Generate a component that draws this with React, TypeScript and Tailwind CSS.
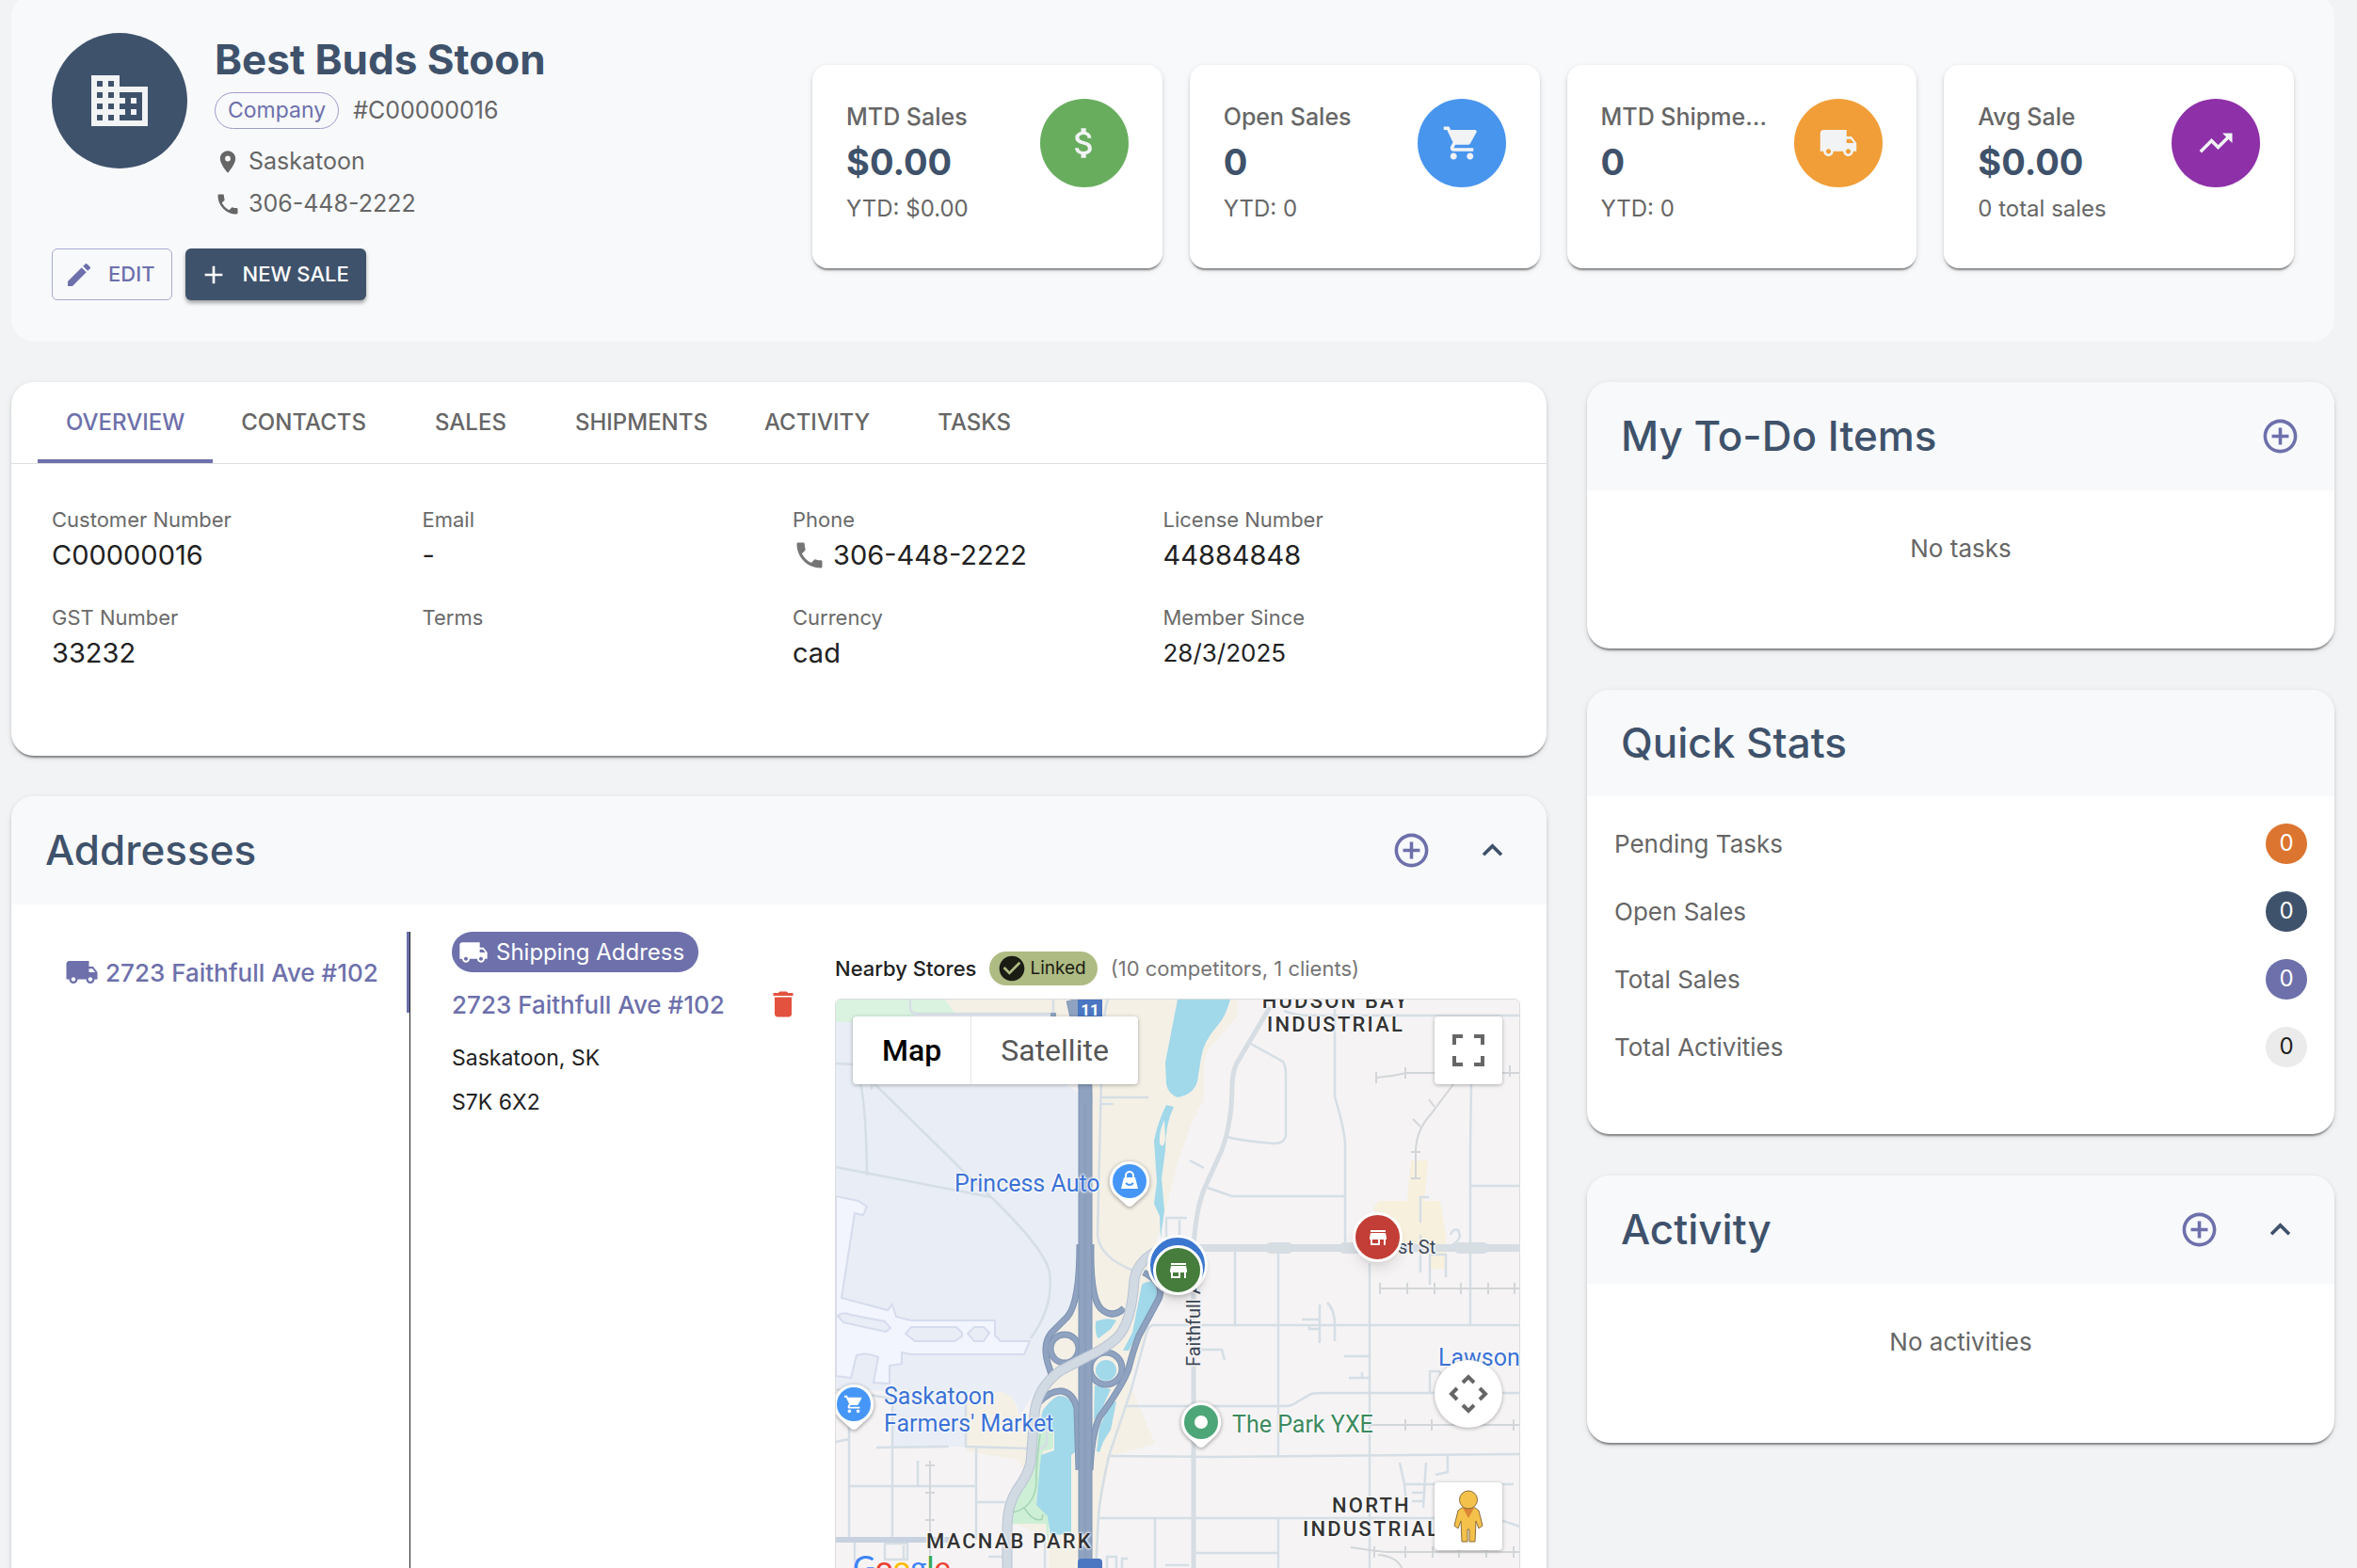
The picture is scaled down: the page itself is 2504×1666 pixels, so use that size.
import React, { useState } from "react";
import {
  MdAdd,
  MdAddCircleOutline,
  MdAttachMoney,
  MdBusiness,
  MdCheckCircle,
  MdDelete,
  MdEdit,
  MdExpandLess,
  MdLocalShipping,
  MdLocationOn,
  MdPhone,
  MdShoppingCart,
  MdStore,
  MdTrendingUp,
} from "react-icons/md";

const cardShadow =
  "shadow-[0_4px_2px_-2px_rgba(0,0,0,0.3),0_2px_2px_0_rgba(0,0,0,0.16),0_2px_6px_0_rgba(0,0,0,0.12)]";

const stats = [
  { label: "MTD Sales", value: "$0.00", note: "YTD: $0.00", color: "bg-[#68ad5e]", Icon: MdAttachMoney },
  { label: "Open Sales", value: "0", note: "YTD: 0", color: "bg-[#4895ee]", Icon: MdShoppingCart },
  { label: "MTD Shipments", value: "0", note: "YTD: 0", color: "bg-[#f19e38]", Icon: MdLocalShipping },
  { label: "Avg Sale", value: "$0.00", note: "0 total sales", color: "bg-[#8e30a8]", Icon: MdTrendingUp },
];

const tabs = ["OVERVIEW", "CONTACTS", "SALES", "SHIPMENTS", "ACTIVITY", "TASKS"];

const quickStats = [
  { label: "Pending Tasks", badge: "bg-[#dc752f] text-white" },
  { label: "Open Sales", badge: "bg-[#3f526b] text-white" },
  { label: "Total Sales", badge: "bg-[#6d70ab] text-white" },
  { label: "Total Activities", badge: "bg-[#ebebeb] text-[#212121]" },
];

type FieldProps = { label: string; children?: React.ReactNode };

const Field = ({ label, children }: FieldProps) => (
  <div className="h-[104px]">
    <dt className="text-[22px] leading-8 text-[#6a6a6a]">{label}</dt>
    <dd className="flex h-[44px] items-center gap-[7px] text-[29px] leading-[44px] text-[#212121]">
      {children}
    </dd>
  </div>
);

type PanelProps = {
  title: string;
  canAdd?: boolean;
  collapsible?: boolean;
  className?: string;
  children: React.ReactNode;
};

const Panel = ({ title, canAdd, collapsible, className = "", children }: PanelProps) => (
  <section className={`overflow-hidden rounded-3xl bg-white ${cardShadow} ${className}`}>
    <header className="flex items-center gap-[43px] bg-[#f8f9fb] px-9 py-[14px]">
      <h2 className="mr-auto text-[44px] font-medium leading-[85px] text-[#3f526b]">{title}</h2>
      {canAdd && (
        <button aria-label={`Add to ${title}`} className="h-[87px] text-[#6d70ab]">
          <MdAddCircleOutline size={43} />
        </button>
      )}
      {collapsible && (
        <button aria-label={`Collapse ${title}`} className="h-[87px] text-[#3f526b]">
          <MdExpandLess size={43} />
        </button>
      )}
    </header>
    {children}
  </section>
);

const halo = "[text-shadow:0_0_3px_#fff,0_0_3px_#fff,0_0_3px_#fff]";

const MapCanvas = () => (
  <svg
    className="absolute left-0 top-0"
    width="900"
    height="700"
    viewBox="0 0 900 700"
    fill="none"
    aria-hidden="true"
  >
    <rect width="900" height="700" fill="#f5f3f4" />
    {/* land use */}
    <path d="M0 0H260V24H0Z" fill="#f4f0e6" />
    <path d="M0 0H116L126 14L83 16V24H0Z" fill="#d9f3e0" />
    <path
      d="M0 24H83V15H233L236 84L259 100V270Q258 325 240 340Q220 364 226 397L207 424L195 442Q192 417 171 417L139 430V475H61V417L0 412Z"
      fill="#e8edf6"
    />
    <path
      d="M274 0H427V17L404 44Q391 54 391 74V107Q380 125 376 137L363 174L348 234L340 257L345 317L330 350L312 407L339 472L292 485L279 550V640H226V570L187 556L213 434L226 397L223 364L259 320Z"
      fill="#f4f0e6"
    />
    <path d="M139 424L170 417Q188 415 194 440L208 455V490L198 500Q198 487 180 487L139 480Z" fill="#f4f0e6" />
    <path
      d="M0 209L24 214L33 220L29 229L20 227L6 317L55 330L60 324L64 337L80 341H169V357L175 363H206L200 377H80L70 375V387L57 389V408L40 407L45 380Q32 374 22 378L16 402L0 400Z"
      fill="#f2f5fd"
      stroke="#d6dcee"
      strokeWidth="2"
    />
    <path
      d="M2 336Q8 331 16 335L52 342L58 349L53 353L8 343ZM80 348H128L134 354V358L126 363H84L74 355ZM147 348H157L163 354L157 363H147L140 355Z"
      fill="#e8edf6"
      stroke="#d6dcee"
      strokeWidth="2"
    />
    <path d="M611 171H629L625 214H642L648 250V286H631L628 268H590L571 222L577 214H607Z" fill="#f7f0dc" />
    <path
      d="M215 457L231 460V477L220 480L213 534L227 540L226 570V584L223 557H187V540L200 504Q207 490 209 470Z"
      fill="#cdefd6"
    />
    {/* water */}
    <g fill="#a1d8ea">
      <path d="M363 0H419Q414 18 406 27Q390 45 388 62L384 87Q380 101 363 104Q353 100 351 90L350 67Z" />
      <path
        fillRule="evenodd"
        d="M351 112L359 114Q350 132 350 160L346 190L349 224L345 254L344 230L338 217L341 194L338 150Q342 130 351 112ZM349 128Q343 140 344 153Q348 160 350 148Z"
      />
      <path d="M220 436Q232 421 238 421Q252 422 254 440L255 480L250 484V568L228 569L225 549L213 537L218 484L232 479V460L215 454Z" />
      <path d="M325 303Q330 299 337 300L343 314L323 350L311 373L305 373L315 354Z" />
      <path d="M276 342Q288 337 298 341L292 350L279 360Q275 357 276 342Z" />
      <circle cx="287" cy="394" r="11" />
      <path d="M275 410L292 414L283 434L274 447ZM292 429L298 427L292 457L284 470L280 481L277 480L280 454Z" />
    </g>
    {/* minor streets */}
    <g stroke="#d5dee5" strokeWidth="2.5">
      <path d="M79 0V8Q79 15 86 15H233M231 0V14M274 0V10M289 0Q282 20 282 84L278 250Q280 274 316 288" />
      <path d="M0 68L20 69Q32 90 33 187L34 183M0 178L165 210Q222 265 227 290Q232 325 207 360M20 69L137 184L165 210M38 96V70" />
      <path d="M282 104H332M282 111H295M376 171L391 179M351 254V232H373M365 234V260" />
      <path d="M476 12Q490 17 500 17H727M530 10V103Q541 140 541 155V264M439 46L475 66Q478 70 478 80V145Q476 153 466 153Q430 150 416 146" />
      <path d="M395 200L421 209H541M675 90L674 157V345M674 198H727M621 250V290M630 271H648V295M631 271V303M621 237V210H630" />
      <path d="M727 346H337Q332 347 330 354L314 414L290 485Q280 530 279 550L276 604" />
      <path d="M424 268V345M470 268V485M567 280V604M514 324V365M522 322Q530 330 530 345V363M495 340H514M503 345V350H514" />
      <path d="M307 432H477Q485 432 491 427L505 419Q510 418 518 418H727M388 372H410L413 383M540 379H567M559 396V401M545 402H567M631 418V395H642M642 412V395" />
      <path d="M290 485L400 486L727 483M279 551H500L700 551L727 560M339 551V604M470 551V604M380 588H470" />
      <path d="M599 492L604 515L606 535M627 492L624 540M650 485V502L637 505M604 515H720M612 524H625M612 533H625" />
      <path d="M0 414L60 424V475M60 475V574M14 440V574M14 517H149M149 476V574M149 534H187M43 476L120 475M138 424V475L205 477Q225 480 224 468V458M87 490V516M0 470L14 467M20 574V610M52 574V595H76V578H52M72 580V595M162 592H185M222 575V610" />
      <path d="M288 620V592H298V612M304 612V594H310M350 601H375M653 250Q655 243 661 245Q667 255 652 262" />
    </g>
    {/* rail lines */}
    <g stroke="#d3d6d9" strokeWidth="2">
      <path d="M574 83Q590 82 606 78H727M574 77V89M605 72V84M706 72V84M716 70V82M656 90L632 122Q617 138 616 160V190M630 106L636 114M613 127L621 135M611 162H621M611 190H621" />
      <path d="M577 307H727M578 301V313M607 301V313M636 301V313M664 301V313M693 301V313M721 301V313" />
      <path d="M560 452H727M605 446V458M633 446V458M720 446V458M100 490V590M95 495H105M95 524H105M95 553H105" />
      <path d="M547 582Q565 585 585 587H727M605 581V593M634 581V593M662 581V593M691 581V593M720 581V593M572 581V593M576 590Q600 592 603 610" />
    </g>
    {/* arterials */}
    <g stroke="#d6dde3" strokeLinecap="round">
      <path d="M460 10L428 64Q422 72 421 90Q421 130 410 160L391 202Q382 225 380 264" strokeWidth="5" />
      <path d="M380 264V640" strokeWidth="5" />
      <path d="M345 264H727" strokeWidth="8" />
      <path d="M462 264H480M662 264H688M540 264H560" strokeWidth="12" />
      <path d="M0 574H125" stroke="#c7d1df" strokeWidth="6" />
    </g>
    <g stroke="#7d92b2" strokeWidth="7">
      <path d="M259 260Q259 322 246 337L229 354Q218 368 227 392L231 405" />
      <path d="M271 260Q270 315 281 328Q294 340 306 328" />
      <path d="M327 290Q350 302 343 318L322 357Q316 372 311 392Q306 408 280 444Q272 460 270 500" />
      <circle cx="243" cy="371" r="15" />
      <circle cx="287" cy="392" r="17" />
      <path d="M216 428Q228 415 240 416Q252 418 256 434L258 500" />
    </g>
    <g stroke="#8fa3c0" strokeWidth="5">
      <path d="M259 260Q259 322 246 337L229 354Q218 368 227 392L231 405" />
      <path d="M271 260Q270 315 281 328Q294 340 306 328" />
      <path d="M327 290Q350 302 343 318L322 357Q316 372 311 392Q306 408 280 444Q272 460 270 500" />
      <circle cx="243" cy="371" r="15" />
      <circle cx="287" cy="392" r="17" />
      <path d="M216 428Q228 415 240 416Q252 418 256 434L258 500" />
    </g>
    <path d="M252 0Q266 60 265 110V640" stroke="#7d92b2" strokeWidth="15" />
    <path d="M252 0Q266 60 265 110V640" stroke="#8fa3c0" strokeWidth="13" />
    <path d="M265 110V640" stroke="#8398b7" strokeWidth="1" />
    <path d="M231 14V30" stroke="#8fa3c0" strokeWidth="6" />
    <path
      d="M348 264Q320 276 317 298Q314 345 298 360Q286 371 266 380L239 394Q214 412 211 440L207 492Q204 505 193 520Q182 537 182 560V640"
      stroke="#b9c4d3"
      strokeWidth="11"
    />
    <path
      d="M348 264Q320 276 317 298Q314 345 298 360Q286 371 266 380L239 394Q214 412 211 440L207 492Q204 505 193 520Q182 537 182 560V640"
      stroke="#d1d9e2"
      strokeWidth="9"
    />
    <path d="M217 462Q212 500 213 515Q210 540 188 545M200 540Q210 556 219 552L220 547" stroke="#a3d4b2" strokeWidth="1.5" />
    {/* highway shields */}
    <path d="M257 0H283V24H257Z" fill="#4a76c2" />
    <path d="M257 640V598Q257 594 261 594H279Q283 594 283 598V640Z" fill="#4a76c2" />
    <text x="270" y="17" textAnchor="middle" fill="#fff" fontFamily="Roboto, sans-serif" fontWeight="700" fontSize="17">
      11
    </text>
    <text
      transform="translate(387 390) rotate(-90)"
      fill="#3c4654"
      stroke="#f5f3f4"
      strokeWidth="3"
      paintOrder="stroke"
      fontFamily="Roboto, sans-serif"
      fontWeight="400"
      fontSize="20"
    >
      Faithfull Ave
    </text>
  </svg>
);

type PinProps = { className: string; fill: string; label: string; children: React.ReactNode };

const Pin = ({ className, fill, label, children }: PinProps) => (
  <svg
    className={`absolute drop-shadow-[0_1px_2px_rgba(0,0,0,0.4)] ${className}`}
    width="44"
    height="52"
    viewBox="0 0 44 52"
    role="img"
    aria-label={label}
  >
    <path d="M22 1a21 21 0 0 1 15 36L25 48q-3 2-6 0L7 37A21 21 0 0 1 22 1Z" fill="#fff" />
    <circle cx="22" cy="22" r="18" fill={fill} />
    {children}
  </svg>
);

const StoreMap = () => {
  const [mode, setMode] = useState("Map");

  return (
    <div className="relative h-[800px] overflow-hidden rounded-md border border-[#dcdcdc] font-[Roboto,sans-serif]">
      <MapCanvas />

      <span className={`absolute left-[531px] top-[-11px] -translate-x-1/2 text-center text-[22px] font-medium leading-[25px] tracking-widest text-[#333] ${halo}`}>
        HUDSON&nbsp;BAY INDUSTRIAL
      </span>
      <span className={`absolute left-[569px] top-[525px] -translate-x-1/2 text-center text-[22px] font-medium leading-[25px] tracking-widest text-[#333] ${halo}`}>
        NORTH INDUSTRIAL
      </span>
      <span className={`absolute left-24 top-[563px] text-[22px] font-medium leading-[25px] tracking-widest text-[#333] ${halo}`}>
        MACNAB PARK
      </span>
      <span className={`absolute left-[126px] top-[182px] text-[25px] leading-7 text-[#3b72d6] ${halo}`}>Princess Auto</span>
      <span className={`absolute left-[51px] top-[407px] whitespace-nowrap text-[25px] leading-[29px] text-[#3b72d6] ${halo}`}>
        Saskatoon
        <br />
        Farmers' Market
      </span>
      <span className={`absolute left-[421px] top-[438px] text-[25px] leading-7 text-[#3c8a5e] ${halo}`}>The Park YXE</span>
      <span className={`absolute left-[640px] top-[367px] text-[25px] leading-7 text-[#3b72d6] ${halo}`}>Lawson</span>
      <span className={`absolute left-[597px] top-[251px] text-[20px] leading-6 text-[#3c4654] ${halo}`}>st St</span>

      <Pin className="left-[290px] top-[171px]" fill="#4596f7" label="Princess Auto">
        <path d="M16 18H28L31 30H13Z" fill="#fff" />
        <path d="M18 19V16a4 4 0 0 1 8 0V19" fill="none" stroke="#fff" strokeWidth="2" />
        <path d="M18 24q4 4 8 0" fill="none" stroke="#4596f7" strokeWidth="2" />
      </Pin>
      <Pin className="left-[-3px] top-[408px]" fill="#4596f7" label="Saskatoon Farmers' Market">
        <MdShoppingCart x={11} y={11} size={22} color="#fff" />
      </Pin>
      <Pin className="left-[366px] top-[427px]" fill="#4da678" label="The Park YXE">
        <circle cx="22" cy="22" r="7" fill="#fff" />
      </Pin>

      <span className="absolute left-[331px] top-[250px] size-[64px] rounded-full border-[3px] border-white bg-[#3b76cf] shadow-md" />
      <span className="absolute left-[337px] top-[261px] flex size-[53px] items-center justify-center rounded-full border-[3px] border-white bg-[#467c3c] text-white shadow-lg">
        <MdStore size={24} />
      </span>
      <span className="absolute left-[549px] top-[226px] flex size-[53px] items-center justify-center rounded-full border-[3px] border-white bg-[#c23e36] text-white shadow-lg">
        <MdStore size={24} />
      </span>

      <div className="absolute left-[18px] top-[18px] flex h-[72px] rounded-sm bg-white text-[32px] shadow-[0_1px_4px_rgba(0,0,0,0.3)]">
        <button
          onClick={() => setMode("Map")}
          className={`border-r border-[#e6e6e6] px-[31px] ${mode === "Map" ? "font-medium text-black" : "text-[#565656]"}`}
        >
          Map
        </button>
        <button
          onClick={() => setMode("Satellite")}
          className={`px-[31px] ${mode === "Satellite" ? "font-medium text-black" : "text-[#565656]"}`}
        >
          Satellite
        </button>
      </div>
      <button
        aria-label="Toggle fullscreen view"
        className="absolute right-[18px] top-[18px] flex size-[72px] items-center justify-center rounded-sm bg-white shadow-[0_1px_4px_rgba(0,0,0,0.3)]"
      >
        <svg width="34" height="34" viewBox="0 0 34 34" fill="none" stroke="#666" strokeWidth="4">
          <path d="M2 11V2H11M23 2H32V11M32 23V32H23M11 32H2V23" />
        </svg>
      </button>
      <button
        aria-label="Map camera controls"
        className="absolute right-[18px] top-[383px] flex size-[72px] items-center justify-center rounded-full bg-white shadow-[0_1px_4px_rgba(0,0,0,0.3)]"
      >
        <svg width="44" height="44" viewBox="0 0 44 44" fill="none" stroke="#666" strokeWidth="4">
          <path d="M16 10L22 4L28 10M16 34L22 40L28 34M10 16L4 22L10 28M34 16L40 22L34 28" />
        </svg>
      </button>
      <button
        aria-label="Drag Pegman onto the map to open Street View"
        className="absolute right-[18px] top-[513px] flex size-[72px] items-center justify-center rounded-sm bg-white shadow-[0_1px_4px_rgba(0,0,0,0.3)]"
      >
        <svg width="32" height="56" viewBox="0 0 32 56" fill="#f4c14b" stroke="#8a6d3b" strokeWidth="1">
          <path d="M9 19H23L27 22L31 38L27 41L24 33L23 55H17V42H15V55H9L8 33L5 41L1 38L5 22Z" />
          <path d="M10 19H22L16 30Z" fill="#dc8535" stroke="none" />
          <circle cx="16" cy="10.500" r="9.500" />
        </svg>
      </button>

      <span className="absolute left-[18px] top-[584px] font-[Lato,sans-serif] text-[33px] font-medium leading-[36px] [text-shadow:0_0_2px_#fff,0_0_2px_#fff]">
        <span className="text-[#4285f4]">G</span>
        <span className="text-[#ea4335]">o</span>
        <span className="text-[#fbbc04]">o</span>
        <span className="text-[#4285f4]">g</span>
        <span className="text-[#34a853]">l</span>
        <span className="text-[#ea4335]">e</span>
      </span>
    </div>
  );
};

const CustomerHeader = () => (
  <header className="-mt-1.5 grid h-[369px] grid-cols-3 gap-[42px] rounded-3xl bg-[#f8f9fb] px-[43px] pt-[41px]">
    <div>
      <div className="flex gap-[29px]">
        <div className="flex size-36 shrink-0 items-center justify-center rounded-full bg-[#3f526b] text-[#f1f3f5]">
          <MdBusiness size={72} />
        </div>
        <div className="text-[25px] text-[#666]">
          <h1 className="text-[44px] font-bold leading-[56px] text-[#3f526b]">Best Buds Stoon</h1>
          <div className="mt-[7px] flex h-[39px] items-center gap-[15px]">
            <span className="flex h-[39px] items-center rounded-full border border-[#9a9dcb] px-[13px] text-[23px] text-[#6d70ab]">
              Company
            </span>
            <span>#C00000016</span>
          </div>
          <p className="mt-3 flex h-[45px] items-center gap-2">
            <MdLocationOn size={28} />
            Saskatoon
          </p>
          <p className="flex h-[45px] items-center gap-2">
            <MdPhone size={28} />
            306-448-2222
          </p>
        </div>
      </div>
      <div className="mt-[25px] flex gap-[14px] text-[22px] font-medium">
        <button className="flex h-[55px] items-center gap-[15px] rounded-md border border-[#a9abd3] px-3 pr-[17px] text-[#6d70ab]">
          <MdEdit size={32} />
          EDIT
        </button>
        <button className="flex h-[55px] items-center gap-[15px] rounded-md bg-[#3f526b] px-[14px] pr-[18px] text-white shadow-[0_3px_4px_rgba(0,0,0,0.35)]">
          <MdAdd size={32} />
          NEW SALE
        </button>
      </div>
    </div>
    <div className="col-span-2 grid grid-cols-4 gap-[29px] pt-[34px]">
      {stats.map(({ label, value, note, color, Icon }) => (
        <div key={label} className={`flex h-[216px] justify-between gap-6 rounded-2xl bg-white p-9 ${cardShadow}`}>
          <div className="min-w-0 text-[24px] text-[#666]">
            <p className="truncate text-[25px] font-medium leading-[38px]">{label}</p>
            <p className="text-[38px] font-bold leading-[58px] text-[#3f526b]">{value}</p>
            <p className="whitespace-nowrap leading-[42px]">{note}</p>
          </div>
          <div className={`flex size-[94px] shrink-0 items-center justify-center rounded-full text-[#f1f3f5] ${color}`}>
            <Icon size={42} />
          </div>
        </div>
      ))}
    </div>
  </header>
);

const App: React.FC = () => {
  const [activeTab, setActiveTab] = useState("OVERVIEW");

  return (
    <div className="h-screen overflow-hidden bg-[#f1f3f5] px-3 pr-6 font-[Inter,sans-serif]">
      <CustomerHeader />

      <main className="mt-[43px] grid grid-cols-3 items-start gap-[43px]">
        <div className="col-span-2 flex flex-col gap-[43px]">
          <section className={`h-[397px] rounded-3xl bg-white ${cardShadow}`}>
            <nav className="flex h-[87px] border-b border-[#dfdfdf] px-7">
              {tabs.map((tab) => (
                <button
                  key={tab}
                  onClick={() => setActiveTab(tab)}
                  className={`min-w-[162px] border-b-4 px-[30px] pt-[3px] text-[24px] font-medium ${
                    tab === activeTab ? "border-[#6d70ab] text-[#6d70ab]" : "border-transparent text-[#666]"
                  }`}
                >
                  {tab}
                </button>
              ))}
            </nav>
            <dl className="grid grid-cols-4 gap-x-[29px] px-[43px] pt-[43px]">
              <Field label="Customer Number">C00000016</Field>
              <Field label="Email">-</Field>
              <Field label="Phone">
                <MdPhone size={36} className="text-[#757575]" />
                306-448-2222
              </Field>
              <Field label="License Number">44884848</Field>
              <Field label="GST Number">33232</Field>
              <Field label="Terms" />
              <Field label="Currency">cad</Field>
              <Field label="Member Since">
                <span className="text-[26px]">28/3/2025</span>
              </Field>
            </dl>
          </section>

          <Panel title="Addresses" canAdd collapsible>
            <div className="flex gap-11 px-7 pt-[29px]">
              <div className="w-[396px] shrink-0 border-r border-[#222]">
                <button className="flex h-[86px] w-full items-center gap-[7px] whitespace-nowrap border-r-[3px] border-[#6d70ab] pl-[29px] text-[26px] font-medium text-[#6d70ab]">
                  <MdLocalShipping size={36} />
                  2723 Faithfull Ave #102
                </button>
              </div>
              <div className="grid flex-1 grid-cols-[1fr_2fr] gap-[43px]">
                <div className="min-w-0 text-[23px] text-[#212121]">
                  <span className="flex h-[43px] w-fit items-center gap-2 rounded-full bg-[#6d70ab] px-[7px] pr-[15px] text-[24px] text-white">
                    <MdLocalShipping size={32} />
                    Shipping Address
                  </span>
                  <div className="-mr-1.5 flex h-[68px] items-center justify-between">
                    <a href="#address" className="whitespace-nowrap text-[26px] font-medium text-[#6d70ab]">
                      2723 Faithfull Ave #102
                    </a>
                    <button aria-label="Delete address" className="text-[#e2523f]">
                      <MdDelete size={36} />
                    </button>
                  </div>
                  <p className="leading-[47px]">Saskatoon, SK</p>
                  <p className="leading-[47px]">S7K 6X2</p>
                </div>
                <div className="min-w-0 pt-[21px]">
                  <div className="mb-[14px] flex h-9 items-center gap-[14px] whitespace-nowrap text-[22px]">
                    <h3 className="font-medium text-[#212121]">Nearby Stores</h3>
                    <span className="flex h-9 items-center gap-[3px] rounded-full bg-[#aebb83] px-2 pr-3 text-[19px] text-[#1b1c14]">
                      <MdCheckCircle size={32} />
                      Linked
                    </span>
                    <span className="text-[#757575]">(10 competitors, 1 clients)</span>
                  </div>
                  <StoreMap />
                </div>
              </div>
            </div>
          </Panel>
        </div>

        <aside className="flex flex-col gap-11">
          <Panel title="My To-Do Items" canAdd className="h-[283px]">
            <p className="pt-[42px] text-center text-[26px] text-[#666]">No tasks</p>
          </Panel>
          <Panel title="Quick Stats" className="h-[472px]">
            <ul className="px-[29px] pt-[14px]">
              {quickStats.map(({ label, badge }) => (
                <li key={label} className="flex h-[72px] items-center justify-between text-[26px] text-[#666]">
                  {label}
                  <span className={`flex h-[43px] w-11 items-center justify-center rounded-full text-[24px] ${badge}`}>
                    0
                  </span>
                </li>
              ))}
            </ul>
          </Panel>
          <Panel title="Activity" canAdd collapsible className="h-[284px]">
            <p className="pt-[42px] text-center text-[26px] text-[#666]">No activities</p>
          </Panel>
        </aside>
      </main>
    </div>
  );
};

export default App;
